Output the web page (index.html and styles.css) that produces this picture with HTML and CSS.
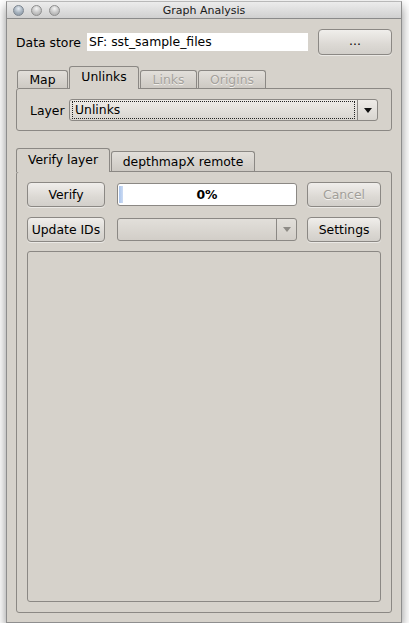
FILE: index.html
```html
<!DOCTYPE html>
<html>
<head>
<meta charset="utf-8">
<link rel="stylesheet" href="styles.css">
</head>
<body>
<div class="window">
  <div class="titlebar">
    <div class="lights"><span class="light"></span><span class="light"></span><span class="light"></span></div>
    <div class="title">Graph Analysis</div>
  </div>
  <div class="content">
    <div class="store-row">
      <span class="label">Data store</span>
      <div class="textfield">SF: sst_sample_files</div>
      <button class="btn btn-dots">...</button>
    </div>

    <div class="tabwidget tw1">
      <div class="tabbar">
        <div class="tab">Map</div>
        <div class="tab selected">Unlinks</div>
        <div class="tab disabled">Links</div>
        <div class="tab disabled">Origins</div>
      </div>
      <div class="pane pane1">
        <span class="label layer-label">Layer</span>
        <div class="combo combo-layer">
          <div class="combo-text"><span class="focus">Unlinks</span></div>
          <div class="combo-arrow"><span class="tri"></span></div>
        </div>
      </div>
    </div>

    <div class="tabwidget tw2">
      <div class="tabbar">
        <div class="tab selected">Verify layer</div>
        <div class="tab">depthmapX remote</div>
      </div>
      <div class="pane pane2">
        <div class="ctrl-row">
          <button class="btn btn-left">Verify</button>
          <div class="progress"><span class="pbar"></span><span class="ptext">0%</span></div>
          <button class="btn btn-right" disabled>Cancel</button>
        </div>
        <div class="ctrl-row">
          <button class="btn btn-left">Update IDs</button>
          <div class="combo combo-ids">
            <div class="combo-text"></div>
            <div class="combo-arrow light-arrow"><span class="tri"></span></div>
          </div>
          <button class="btn btn-right">Settings</button>
        </div>
        <div class="output"></div>
      </div>
    </div>
  </div>
</div>
</body>
</html>
```

FILE: styles.css
```css
html, body {
  margin: 0;
  padding: 0;
  background: #ffffff;
}
body {
  font-family: "DejaVu Sans", "Liberation Sans", sans-serif;
  font-size: 12.4px;
  color: #000;
}
.window {
  margin: 1px 0 0 6px;
  width: 396px;
  height: 622px;
  box-sizing: border-box;
  border: 1px solid #8e8e8e;
  border-top-color: #b8b8b8;
  background: #d6d2cb;
  box-shadow: 0 5px 10px rgba(0,0,0,0.45);
  display: flex;
  flex-direction: column;
}
.titlebar {
  height: 16px;
  border-bottom: 1px solid #8a8a8a;
  background: linear-gradient(#ececec, #d0d0d0);
  position: relative;
  display: flex;
  align-items: center;
  justify-content: center;
}
.lights {
  position: absolute;
  left: 6px;
  top: 3px;
  display: flex;
  gap: 7px;
}
.light {
  width: 11px;
  height: 11px;
  border-radius: 50%;
  box-sizing: border-box;
  border: 1px solid #8e8e8e;
  background: radial-gradient(circle at 50% 30%, #f4f4f4 0%, #c4c4c4 55%, #a8a8a8 100%);
}
.light:first-child {
  background: radial-gradient(circle at 50% 30%, #e6ecf2 0%, #a4b0bc 55%, #8794a2 100%);
  border-color: #7d8690;
}
.title {
  font-size: 11px;
  color: #1a1a1a;
  padding-top: 1px;
}
.content {
  flex: 1;
  padding: 10px 9px 9px 9px;
  display: flex;
  flex-direction: column;
}
.store-row {
  display: flex;
  align-items: center;
  height: 26px;
}
.label {
  white-space: nowrap;
}
.store-row .label {
  width: 71px;
}
.textfield {
  width: 221px;
  height: 18px;
  background: #fff;
  box-sizing: border-box;
  padding-left: 2px;
  line-height: 18px;
}
.btn {
  font-family: inherit;
  font-size: 12.4px;
  color: #000;
  box-sizing: border-box;
  border: 1px solid #8b8884;
  border-radius: 4px;
  background: linear-gradient(#f0eeeb, #dcd9d4 60%, #d2cfca);
  padding: 0;
  margin: 0;
  box-shadow: 0 1px 0 rgba(255,255,255,0.5);
}
.btn:disabled {
  color: #a19e99;
  text-shadow: 0 1px 0 #f4f2ef;
}
.btn-dots {
  margin-left: 10px;
  width: 74px;
  height: 26px;
  padding-bottom: 4px;
}
.tabwidget {
  display: flex;
  flex-direction: column;
}
.tw1 {
  margin-top: 11px;
}
.tw2 {
  margin-top: 17px;
  flex: 1;
}
.tabbar {
  display: flex;
  align-items: flex-end;
  padding-left: 1px;
  position: relative;
  z-index: 1;
  margin-bottom: -1px;
}
.tab {
  box-sizing: border-box;
  border: 1px solid #8b8884;
  border-bottom: none;
  border-radius: 3px 3px 0 0;
  background: linear-gradient(#e2dfda, #cdc9c3);
  text-align: center;
  margin-right: 1px;
  margin-bottom: 1px;
  white-space: nowrap;
}
.tab.disabled {
  color: #a4a19c;
  text-shadow: 0 1px 0 #f2f0ec;
}
.tab.selected {
  background: #d6d2cb;
  margin-bottom: 0;
}
.tw1 .tab {
  height: 18px;
  line-height: 17px;
}
.tw1 .tab.selected {
  height: 23px;
  line-height: 20px;
}
.tw1 .tab:nth-child(1) { width: 51px; }
.tw1 .tab:nth-child(2) { width: 70px; }
.tw1 .tab:nth-child(3) { width: 57px; }
.tw1 .tab:nth-child(4) { width: 68px; }
.tw2 .tab {
  height: 20px;
  line-height: 19px;
}
.tw2 .tab.selected {
  height: 24px;
  line-height: 22px;
}
.tw2 .tab:nth-child(1) { width: 94px; margin-left: -1px; }
.tw2 .tab:nth-child(2) { width: 144px; }
.pane {
  border: 1px solid #8b8884;
  border-radius: 3px;
  box-sizing: border-box;
}
.pane1 {
  height: 43px;
  display: flex;
  align-items: center;
  padding: 1px 13px 0 13px;
}
.layer-label {
  width: 39px;
}
.combo {
  box-sizing: border-box;
  border: 1px solid #8b8884;
  border-radius: 3px;
  background: linear-gradient(#eeebe7, #d8d5d0);
  display: flex;
  height: 22px;
}
.combo-layer {
  flex: 1;
}
.combo-text {
  flex: 1;
  padding: 1px 2px;
  display: flex;
}
.focus {
  flex: 1;
  border: 1px dotted #222;
  line-height: 16px;
  padding-left: 2px;
}
.combo-arrow {
  width: 19px;
  border-left: 1px solid #8b8884;
  display: flex;
  align-items: center;
  justify-content: center;
}
.tri {
  width: 0;
  height: 0;
  border-left: 4px solid transparent;
  border-right: 4px solid transparent;
  border-top: 5px solid #111;
}
.light-arrow .tri {
  border-top-color: #8e8b86;
}
.pane2 {
  flex: 1;
  padding: 10px 10px 10px 10px;
  display: flex;
  flex-direction: column;
  gap: 10px;
}
.ctrl-row {
  display: flex;
  align-items: center;
  height: 25px;
}
.btn-left {
  width: 78px;
  height: 25px;
}
.btn-right {
  width: 74px;
  height: 25px;
  margin-left: 10px;
}
.progress {
  margin-left: 12px;
  width: 180px;
  height: 23px;
  box-sizing: border-box;
  border: 1px solid #8b8884;
  border-radius: 3px;
  background: #fff;
  position: relative;
  display: flex;
  align-items: center;
  justify-content: center;
  font-weight: bold;
}
.pbar {
  position: absolute;
  left: 1px;
  top: 2px;
  bottom: 2px;
  width: 4px;
  background: linear-gradient(90deg, #a9c4ec, #cddcf3);
}
.combo-ids {
  margin-left: 12px;
  width: 181px;
  height: 23px;
  background: linear-gradient(#e2dfda, #d2cec8);
}
.output {
  flex: 1;
  margin-top: -1px;
  border: 1px solid #8b8884;
  border-radius: 3px;
}
```
